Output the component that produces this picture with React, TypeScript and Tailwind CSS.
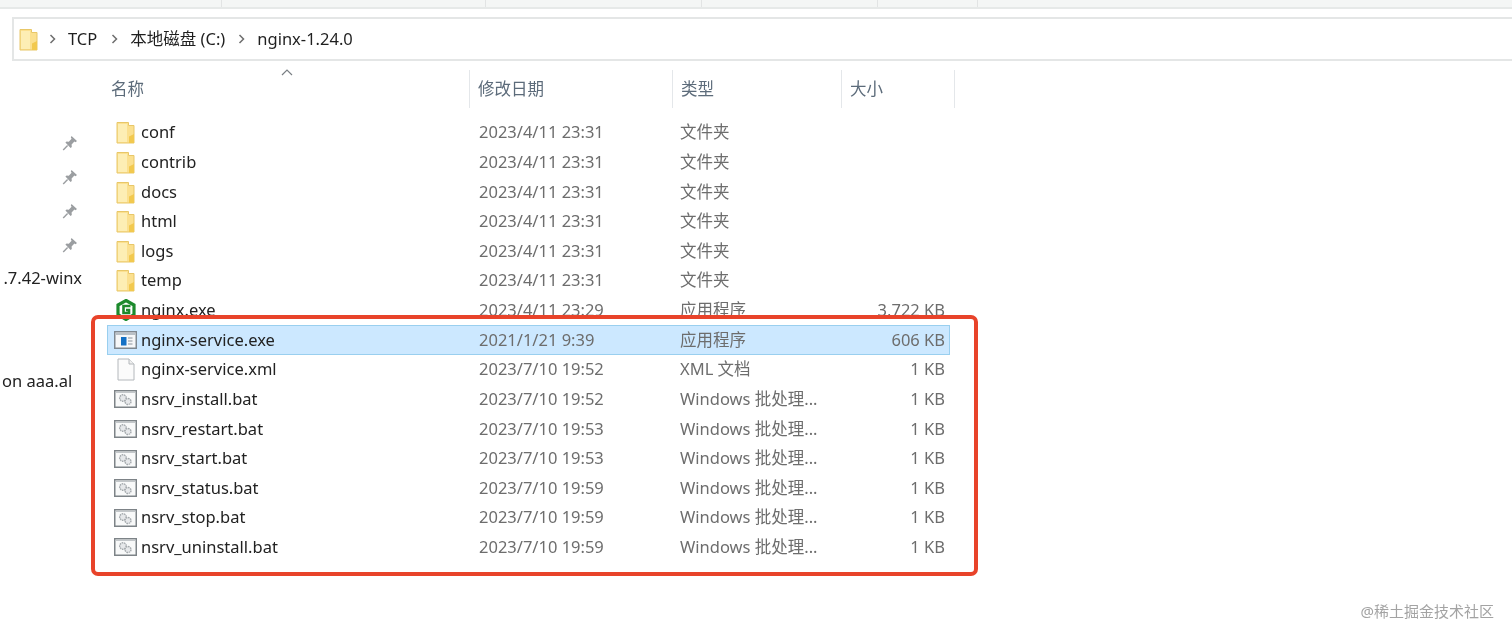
import React from 'react';

const FONT = 'font-["Noto_Sans","Noto_Sans_CJK_SC",sans-serif]';

interface FileRow {
    name: string;
    date: string;
    type: string;
    size?: string;
    icon: 'folder' | 'nginx' | 'exe' | 'file' | 'bat';
    selected?: boolean;
}

const BATCH = 'Windows 批处理...';

const rows: FileRow[] = [
    { name: 'conf', date: '2023/4/11 23:31', type: '文件夹', icon: 'folder' },
    { name: 'contrib', date: '2023/4/11 23:31', type: '文件夹', icon: 'folder' },
    { name: 'docs', date: '2023/4/11 23:31', type: '文件夹', icon: 'folder' },
    { name: 'html', date: '2023/4/11 23:31', type: '文件夹', icon: 'folder' },
    { name: 'logs', date: '2023/4/11 23:31', type: '文件夹', icon: 'folder' },
    { name: 'temp', date: '2023/4/11 23:31', type: '文件夹', icon: 'folder' },
    { name: 'nginx.exe', date: '2023/4/11 23:29', type: '应用程序', size: '3,722 KB', icon: 'nginx' },
    { name: 'nginx-service.exe', date: '2021/1/21 9:39', type: '应用程序', size: '606 KB', icon: 'exe', selected: true },
    { name: 'nginx-service.xml', date: '2023/7/10 19:52', type: 'XML 文档', size: '1 KB', icon: 'file' },
    { name: 'nsrv_install.bat', date: '2023/7/10 19:52', type: BATCH, size: '1 KB', icon: 'bat' },
    { name: 'nsrv_restart.bat', date: '2023/7/10 19:53', type: BATCH, size: '1 KB', icon: 'bat' },
    { name: 'nsrv_start.bat', date: '2023/7/10 19:53', type: BATCH, size: '1 KB', icon: 'bat' },
    { name: 'nsrv_status.bat', date: '2023/7/10 19:59', type: BATCH, size: '1 KB', icon: 'bat' },
    { name: 'nsrv_stop.bat', date: '2023/7/10 19:59', type: BATCH, size: '1 KB', icon: 'bat' },
    { name: 'nsrv_uninstall.bat', date: '2023/7/10 19:59', type: BATCH, size: '1 KB', icon: 'bat' },
];

const Folder = () => (
    <svg width="19" height="23" viewBox="0 0 19 23" className="shrink-0">
        <path d="M1 1.5h11.5v3H18v17.5H1z" fill="#fbe08f" stroke="#e8c768" />
        <path d="M2 3h9v18H2z" fill="#fdeeb4" />
        <path d="M13 15.5l5 -2.5v9h-5z" fill="#f2c94f" />
    </svg>
);

const NginxIcon = () => (
    <svg width="20" height="22" viewBox="0 0 20 22" className="shrink-0">
        <path d="M10 1.5 L18 6 V15.5 L10 20.5 L2 15.5 V6 Z" fill="#fff" stroke="#1c8a2c" strokeWidth="3.2" />
        <path d="M14.5 7H7.5V14H13V11H10" fill="none" stroke="#1c8a2c" strokeWidth="2.6" />
    </svg>
);

const ExeIcon = () => (
    <svg width="23" height="18" viewBox="0 0 23 18" className="shrink-0">
        <rect x="0.75" y="0.75" width="21.5" height="16.5" fill="#f6f7f8" stroke="#7f8890" strokeWidth="1.5" />
        <rect x="1.5" y="1.5" width="20" height="2.5" fill="#b9c0c6" />
        <rect x="7" y="6" width="5.5" height="8.5" fill="#1470c4" />
        <path d="M14 7h4.5M14 10h4.5M14 13h4.5" stroke="#8a939b" strokeWidth="1.2" />
    </svg>
);

const FileIcon = () => (
    <svg width="18" height="23" viewBox="0 0 18 23" className="shrink-0">
        <path d="M1 1h11l5 5v16H1z" fill="#fbfbfb" stroke="#b4b8bc" />
        <path d="M12 1v5h5" fill="#f0f0f0" stroke="#b4b8bc" />
    </svg>
);

const BatIcon = () => (
    <svg width="23" height="18" viewBox="0 0 23 18" className="shrink-0">
        <rect x="0.75" y="0.75" width="21.5" height="16.5" fill="#f8f9f9" stroke="#7d8387" strokeWidth="1.5" />
        <rect x="1.5" y="1.5" width="20" height="1.5" fill="#c3c7ca" />
        <circle cx="9" cy="8" r="3.3" fill="#e6e8ea" stroke="#a3a8ac" strokeWidth="1.4" strokeDasharray="1.6 0.7" />
        <circle cx="14" cy="11.5" r="3" fill="#e6e8ea" stroke="#a3a8ac" strokeWidth="1.4" strokeDasharray="1.6 0.7" />
    </svg>
);

const icons = {
    folder: <Folder />,
    nginx: <NginxIcon />,
    exe: <ExeIcon />,
    file: <FileIcon />,
    bat: <BatIcon />,
};

const Pin = () => (
    <svg width="16" height="16" viewBox="0 0 16 16">
        <path d="M9.5 1 L15 6 L13.5 7.2 L12.4 6.6 L9.6 9.6 L9.8 12 L8.6 13 L3.4 7.6 L4.6 6.6 L6.8 6.8 L9.6 3.8 L8.8 2.4 Z" fill="#9b9ea1" />
        <path d="M5.6 10.4 L1.2 15" stroke="#9b9ea1" strokeWidth="1.4" />
    </svg>
);

const Crumb = () => (
    <svg width="7" height="10" viewBox="0 0 7 10" className="shrink-0">
        <path d="M1.5 1l4 4-4 4" fill="none" stroke="#6d6d6d" strokeWidth="1.5" />
    </svg>
);

const Header = ({ label, className }: { label: string; className: string }) => (
    <div className={`flex h-[38px] items-center border-r border-[#e4e7ea] pl-2 text-[#5c6b7a] ${className}`}>
        {label}
    </div>
);

export default function App() {
    return (
        <div className={`relative h-[636px] w-[1512px] overflow-hidden bg-white text-[16.5px] ${FONT} blur-[0.4px]`}>
            {/* Ribbon remains */}
            <div className="flex h-[9px] border-b-2 border-[#e6e9e8] bg-[#f4f6f5]">
                <div className="w-[222px] border-r border-[#e2e4e4]" />
                <div className="w-[264px] border-r border-[#e2e4e4]" />
                <div className="w-[216px] border-r border-[#e2e4e4]" />
                <div className="w-[176px] border-r border-[#e2e4e4]" />
                <div className="w-[100px] border-r border-[#e2e4e4]" />
            </div>

            {/* Address bar */}
            <div className="ml-3 mt-2 flex h-[44px] items-center border-y-2 border-l-2 border-[#e4e6e6] pl-[5px] text-[#1f1f1f]">
                <Folder />
                <div className="ml-[11px]"><Crumb /></div>
                <span className="ml-[12px]">TCP</span>
                <div className="ml-[14px]"><Crumb /></div>
                <span className="ml-[12px]">本地磁盘 (C:)</span>
                <div className="ml-[13px]"><Crumb /></div>
                <span className="ml-[12px]">nginx-1.24.0</span>
            </div>

            <div className="flex">
                {/* Quick access pane, cropped on the left */}
                <div className="relative w-[107px] shrink-0 overflow-hidden text-[#222]">
                    <div className="mt-[74px] flex flex-col items-end gap-[18px] pr-[29px]">
                        <Pin />
                        <Pin />
                        <Pin />
                        <Pin />
                    </div>
                    <div className="mt-[13px] -ml-[6px] whitespace-nowrap">1.7.42-winx</div>
                    <div className="mt-[78px] ml-[2px] whitespace-nowrap">on aaa.al</div>
                </div>

                {/* File list */}
                <div className="flex-1">
                    <div className="relative mt-[9px] flex">
                        <Header label="名称" className="w-[363px] pl-[4px]" />
                        <Header label="修改日期" className="w-[203px]" />
                        <Header label="类型" className="w-[169px]" />
                        <Header label="大小" className="w-[113px]" />
                        <svg width="12" height="7" viewBox="0 0 12 7" className="absolute left-[174px] top-[-1px]">
                            <path d="M1 6l5-5 5 5" fill="none" stroke="#7a7f84" strokeWidth="1.2" />
                        </svg>
                    </div>
                    <div className="mt-[10px] w-[843px]">
                        {rows.map(row => (
                            <div
                                key={row.name}
                                className={`flex h-[29.62px] items-center border ${
                                    row.selected ? 'border-[#99cfef] bg-[#cce8ff]' : 'border-transparent'
                                }`}
                            >
                                <div className="flex w-[362px] items-center text-[#222]">
                                    <div className="flex w-[33px] justify-center pl-[2px]">{icons[row.icon]}</div>
                                    <span className="whitespace-nowrap">{row.name}</span>
                                </div>
                                <div className="w-[204px] whitespace-nowrap pl-[9px] text-[#6d6d6d]">{row.date}</div>
                                <div className="w-[165px] whitespace-nowrap pl-[6px] text-[#6d6d6d]">{row.type}</div>
                                <div className="flex-1 whitespace-nowrap pr-[4px] text-right text-[#6d6d6d]">{row.size}</div>
                            </div>
                        ))}
                    </div>
                </div>
            </div>

            {/* Red annotation */}
            <div className="pointer-events-none absolute left-[91px] top-[315px] h-[261px] w-[887px] rounded-[7px] border-4 border-[#e8432a]" />

            {/* Watermark */}
            <div className="absolute bottom-[14px] right-[18px] text-[15px] text-[#a3a3a3]">@稀土掘金技术社区</div>
        </div>
    );
}
